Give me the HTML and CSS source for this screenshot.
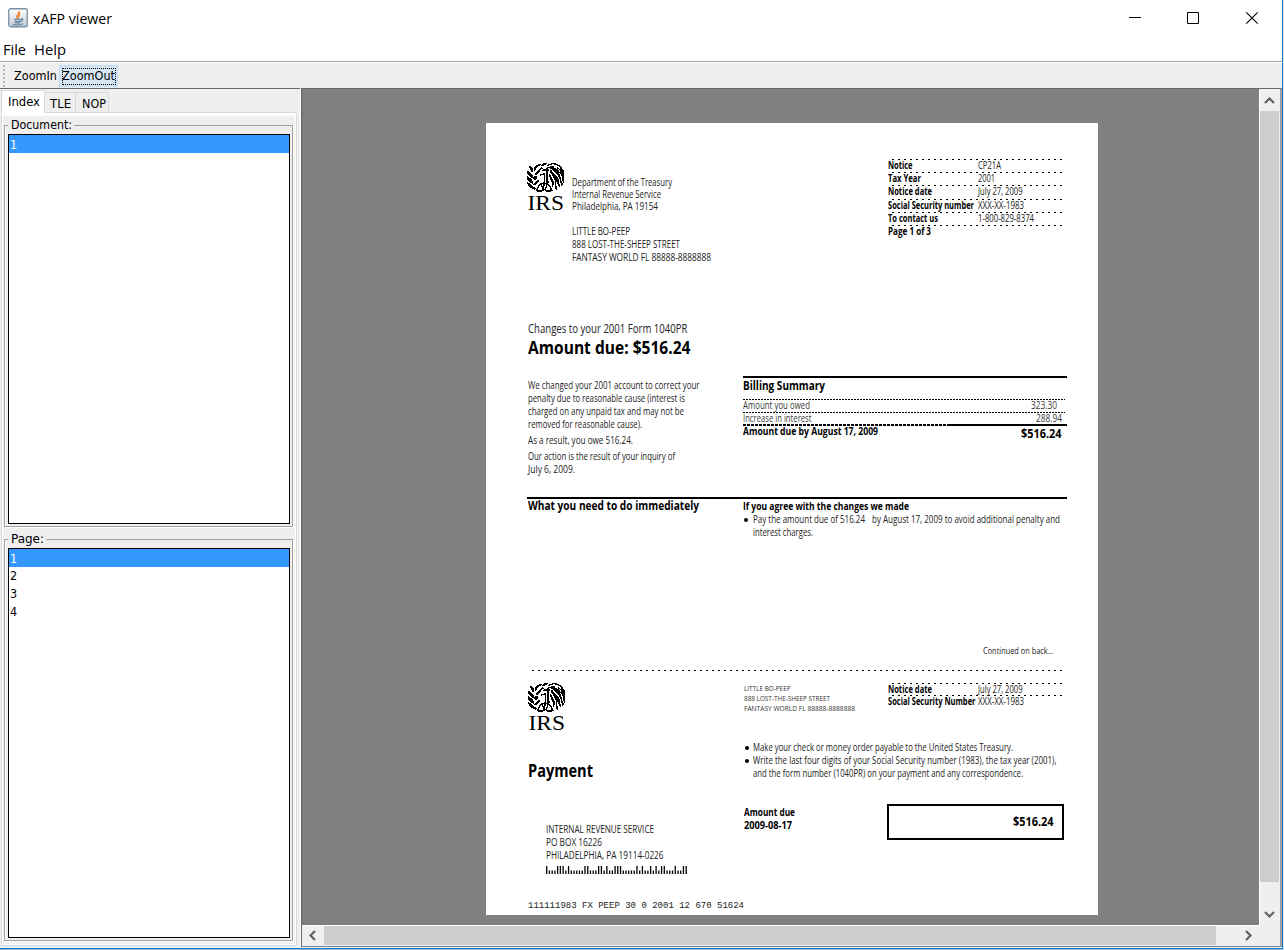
FILE: index.html
```html
<!DOCTYPE html>
<html lang="en">
<head>
<meta charset="utf-8">
<title>xAFP viewer</title>
<link rel="stylesheet" href="styles.css">
</head>
<body>
<div class="window">
  <header class="titlebar">
    <svg class="app-icon" width="20" height="20" viewBox="0 0 20 20">
      <defs><linearGradient id="g" x2="0" y2="1"><stop stop-color="#fff"/><stop offset="1" stop-color="#c3ccd6"/></linearGradient></defs>
      <rect x=".75" y=".75" width="18.5" height="18" rx="2" fill="url(#g)" stroke="#7890a5" stroke-width="1.3"/>
      <path d="M9.5 10.5c-3-3 2.5-3.500 1-7 2 2 1.200 3.300 0 4.300s-.7 1.700-1 2.700zM12 7c-2 1-2 2-1 3.500" fill="none" stroke="#ee8a3c" stroke-width="1.300"/>
      <path d="M6 11.300h7.500M6.500 12.800q3.500 1.500 6.500 0M7 14.500q3 1 5 0M13 11c3-.6 2 2-.6 2.500M4.500 16q5 2 10.500-.3" fill="none" stroke="#55789b" stroke-width="1.100"/>
    </svg>
    <span class="caption"><span class="t" data-w="79">xAFP viewer</span></span>
    <svg class="controls" width="129" height="14" viewBox="0 0 129 14" fill="none" stroke="#000">
      <path d="M0 6.500h12M58.500 1.500h11v11h-11z"/>
      <path d="M117.300 1.300l11.400 11.400M128.700 1.300l-11.400 11.400" stroke-width="1.200"/>
    </svg>
  </header>
  <nav class="menubar"><span class="t" data-w="23">File</span><span class="t" data-w="32">Help</span></nav>
  <div class="toolbar">
    <i class="grip"></i>
    <span class="tool"><span class="t" data-w="43">ZoomIn</span></span>
    <span class="tool active"><span class="focus"><span class="t" data-w="53">ZoomOut</span></span></span>
  </div>
  <main class="split">
    <aside class="side">
      <div class="tabs">
        <span class="tab on"><span class="t" data-w="32">Index</span></span><span class="tab"><span class="t" data-w="21">TLE</span></span><span class="tab nop"><span class="t" data-w="24">NOP</span></span><i class="rest"></i>
      </div>
      <div class="pane">
        <fieldset class="group"><legend><span class="t" data-w="61">Document:</span></legend>
          <ul class="list"><li class="sel">1</li></ul>
        </fieldset>
        <fieldset class="group"><legend><span class="t" data-w="33">Page:</span></legend>
          <ul class="list"><li class="sel">1</li><li>2</li><li>3</li><li>4</li></ul>
        </fieldset>
      </div>
    </aside>
    <section class="scroller">
      <div class="viewport">
        <article class="paper">
          <div class="head">
            <svg class="logo" width="38" height="54"><path class="seal"/><text x="0.500" y="47" textLength="36.500" lengthAdjust="spacingAndGlyphs">IRS</text></svg>
            <div class="address">
              <div class="from">
                <p><span class="t" data-w="100">Department of the Treasury</span></p>
                <p><span class="t" data-w="89">Internal Revenue Service</span></p>
                <p><span class="t" data-w="86">Philadelphia, PA 19154</span></p>
              </div>
              <p><span class="t" data-w="58">LITTLE BO-PEEP</span></p>
              <p><span class="t" data-w="108">888 LOST-THE-SHEEP STREET</span></p>
              <p><span class="t" data-w="139">FANTASY WORLD FL 88888-8888888</span></p>
            </div>
            <div class="notice">
              <p><b class="t" data-w="24.500">Notice</b><span class="t" data-w="23">CP21A</span></p>
              <p><b class="t" data-w="33">Tax Year</b><span class="t" data-w="17">2001</span></p>
              <p><b class="t" data-w="44">Notice date</b><span class="t" data-w="44.500">July 27, 2009</span></p>
              <p><b class="t" data-w="86">Social Security number</b><span class="t" data-w="46">XXX-XX-1983</span></p>
              <p><b class="t" data-w="50">To contact us</b><span class="t" data-w="56">1-800-829-8374</span></p>
              <p><b class="t" data-w="43">Page 1 of 3</b></p>
            </div>
          </div>
          <div class="title">
            <p class="form"><span class="t" data-w="159.500">Changes to your 2001 Form 1040PR</span></p>
            <p class="due"><b class="t" data-w="162.500">Amount due: $516.24</b></p>
          </div>
          <div class="cols summary">
            <div class="reason">
              <p><span class="t" data-w="171.500">We changed your 2001 account to correct your</span></p>
              <p><span class="t" data-w="157">penalty due to reasonable cause (interest is</span></p>
              <p><span class="t" data-w="156">charged on any unpaid tax and may not be</span></p>
              <p><span class="t" data-w="114">removed for reasonable cause).</span></p>
              <p class="gap"><span class="t" data-w="105">As a result, you owe 516.24.</span></p>
              <p class="gap"><span class="t" data-w="147">Our action is the result of your inquiry of</span></p>
              <p><span class="t" data-w="47">July 6, 2009.</span></p>
            </div>
            <div class="billing">
              <h3><b class="t" data-w="82">Billing Summary</b></h3>
              <p class="dotted"><span class="t" data-w="67">Amount you owed</span><span class="t in" data-w="26">323.30</span></p>
              <p class="dotted"><span class="t" data-w="68.500">Increase in interest</span><span class="t" data-w="26">288.94</span></p>
              <p class="total"><b class="t" data-w="135">Amount due by August 17, 2009</b><b class="t sum" data-w="40.500">$516.24</b></p>
            </div>
          </div>
          <div class="cols todo">
            <h3><b class="t" data-w="171">What you need to do immediately</b></h3>
            <div class="agree">
              <p><b class="t" data-w="166">If you agree with the changes we made</b></p>
              <p class="bullet"><span class="t" data-w="112">Pay the amount due of 516.24</span><span class="t by" data-w="188">by August 17, 2009 to avoid additional penalty and</span></p>
              <p class="indent"><span class="t" data-w="60">interest charges.</span></p>
            </div>
          </div>
          <p class="continued"><span class="t" data-w="70.500">Continued on back…</span></p>
          <div class="stub">
            <svg class="logo" width="38" height="54"><path class="seal"/><text x="0.500" y="47" textLength="36.500" lengthAdjust="spacingAndGlyphs">IRS</text></svg>
            <div class="mini">
              <p><span class="t" data-w="46.500">LITTLE BO-PEEP</span></p>
              <p><span class="t" data-w="86">888 LOST-THE-SHEEP STREET</span></p>
              <p><span class="t" data-w="111">FANTASY WORLD FL 88888-8888888</span></p>
            </div>
            <div class="notice">
              <p><b class="t" data-w="44">Notice date</b><span class="t" data-w="44.500">July 27, 2009</span></p>
              <p><b class="t" data-w="87.500">Social Security Number</b><span class="t" data-w="46">XXX-XX-1983</span></p>
            </div>
          </div>
          <div class="cols pay">
            <h2><b class="t" data-w="65">Payment</b></h2>
            <div class="steps">
              <p class="bullet"><span class="t" data-w="260">Make your check or money order payable to the United States Treasury.</span></p>
              <p class="bullet"><span class="t" data-w="303.500">Write the last four digits of your Social Security number (1983), the tax year (2001),</span></p>
              <p class="indent"><span class="t" data-w="270">and the form number (1040PR) on your payment and any correspondence.</span></p>
            </div>
          </div>
          <div class="cols remit">
            <div class="payee">
              <p><span class="t" data-w="108">INTERNAL REVENUE SERVICE</span></p>
              <p><span class="t" data-w="56">PO BOX 16226</span></p>
              <p><span class="t" data-w="117.500">PHILADELPHIA, PA 19114-0226</span></p>
              <svg class="postnet" width="142" height="8"></svg>
            </div>
            <div class="amount">
              <p><b class="t" data-w="51">Amount due</b></p>
              <p><b class="t" data-w="48">2009-08-17</b></p>
            </div>
            <div class="box"><b class="t" data-w="40.500">$516.24</b></div>
          </div>
          <p class="ocr"><span class="t" data-w="216">111111983 FX PEEP 30 0 2001 12 670 51624</span></p>
        </article>
      </div>
      <div class="vbar">
        <svg width="19" height="21" viewBox="0 0 19 21"><path d="M5 13l4.500-4.500 4.500 4.500"/></svg>
        <i class="thumb"></i>
        <svg width="19" height="21" viewBox="0 0 19 21"><path d="M5 8l4.500 4.500 4.500-4.500"/></svg>
      </div>
      <div class="hbar">
        <svg width="21" height="19" viewBox="0 0 21 19"><path d="M12 5l-4.500 4.500 4.500 4.500"/></svg>
        <i class="thumb"></i>
        <svg width="21" height="19" viewBox="0 0 21 19"><path d="M8 5l4.500 4.500-4.500 4.500"/></svg>
      </div>
    </section>
  </main>
</div>
<script src="app.js"></script>
</body>
</html>
```
FILE: styles.css
```css
* { box-sizing: border-box; }
body, p, h2, h3, ul, fieldset { margin: 0; padding: 0; }
body { width: 1284px; height: 950px; overflow: hidden; background: #fff; color: #000; font: 12.5px "DejaVu Sans Condensed", "DejaVu Sans", sans-serif; font-stretch: condensed; }
svg { display: block; flex: none; }
.t { display: inline-block; white-space: pre; transform-origin: 0 50%; flex: none; }

.window { width: 1284px; height: 950px; display: flex; flex-direction: column; border-right: 1px solid #dbe6f0; border-bottom: 1px solid #a3b5c4; }
.titlebar, .menubar, .toolbar, .split { border-right: 1px solid #0a7ad8; }
.titlebar { height: 38px; display: flex; align-items: center; padding-left: 8px; }
.app-icon { margin-bottom: 3px; }
.caption { margin-left: 5px; font: 15px/36px "Open Sans", sans-serif; margin-bottom: 2px; }
.controls { margin-left: auto; margin-right: 24px; margin-bottom: 2px; }
.menubar { height: 24px; display: flex; gap: 8px; padding-left: 3px; font: 15px/22px "Open Sans", sans-serif; border-bottom: 1px solid #a0a0a0; }
.toolbar { height: 26px; display: flex; align-items: center; background: #efefef; border-top: 1px solid #fff; padding-left: 3px; }
.grip { width: 2px; height: 22px; background: repeating-linear-gradient(#b8b8b8 0 2px, transparent 2px 4px); }
.tool { height: 22px; line-height: 22px; padding-left: 9px; }
.tool.active { margin-left: 2px; padding: 2px; background: #d5e5f3; border: 1px solid #bfdcf5; width: 59px; }
.focus { display: block; width: 54px; height: 17px; line-height: 16px; outline: 1px dotted #000; outline-offset: -1px; }

.split { flex: 1; display: flex; min-height: 0; border-bottom: 1px solid #0a7ad8; }
.side { width: 300px; display: flex; flex-direction: column; background: #efefef; border-top: 1px solid #696969; padding: 1px 3px 1px 1px; height: 859px; }
.tabs { display: flex; align-items: flex-end; height: 23px; line-height: 21px; }
.tab { height: 21px; width: 31px; padding-left: 5px; border: 1px solid #d9d9d9; border-left: 0; }
.tab.on { height: 23px; width: 44px; padding-left: 6px; background: #fff; border-left: 1px solid #d9d9d9; border-bottom: 0; line-height: 22px; }
.tab.nop { width: 33px; padding-left: 6px; }
.rest { flex: 1; height: 1px; background: #d9d9d9; }
.pane { flex: 1; min-height: 0; display: flex; flex-direction: column; background: #efefef; border: 1px solid #d9d9d9; border-top: 3px solid #fff; box-shadow: inset 1px 0 #fff, inset -1px -1px #fff; padding: 2px 2px 3px 2px; }
.group { flex: 1; min-width: 0; border: 1px solid #a0a0a0; box-shadow: 1px 1px #fff, inset 1px 0 #fff; margin: 0 1px 1px 0; padding: 0 2px 2px 3px; display: flex; }
.pane .group + .group { margin-top: 4px; }
legend { padding: 0 2px 0 3px; height: 15px; line-height: 14px; margin-left: 0; }
.list { flex: none; width: 282px; list-style: none; background: #fff; border: 1px solid #000; height: 390px; line-height: 18px; margin-top: 1px; }
.list li { height: 18px; padding-left: 1px; }
.list .sel { background: #3399ff; color: #fff; padding-top: 1px; }

.scroller { width: 981px; height: 859px; margin-left: 1px; display: grid; grid-template-columns: 957px 20px; grid-template-rows: 836px 20px; border: 1px solid #696969; border-right: 2px solid #a0a0a0; border-bottom-color: #808080; background: #efefef; }
.viewport { background: #808080; padding: 34px 0 0 183px; overflow: hidden; border-left: 1px solid #787880; }
.vbar { border-left: 1px solid #fff; display: flex; flex-direction: column; padding-top: 1px; }
.vbar .thumb { height: 771px; margin: 0 0 22px; background: #cdcdcd; width: 19px; }
.hbar { border-top: 1px solid #fff; display: flex; padding-left: 1px; }
.hbar .thumb { width: 892px; margin-right: 22px; background: #cdcdcd; height: 19px; }
.vbar path, .hbar path { fill: none; stroke: #606060; stroke-width: 2.200; }

.paper { width: 612px; height: 792px; background: #fff; display: flex; flex-direction: column; padding: 0 31px 0 41px; color: #222; font: 10px/13px "Open Sans", "Noto Sans", sans-serif; font-stretch: normal; }
.paper p, .paper h3, .paper h2 { height: 13px; font-size: 10px; line-height: 13px; font-weight: normal; white-space: nowrap; }
.paper b { font-weight: 700; color: #000; }
.head { display: flex; height: 199px; }
.logo { margin-top: 40px; }
.logo text { font: 22px "Liberation Serif", serif; }
.logo .seal { fill: #000; shape-rendering: crispEdges; }
.address { margin: 53px 0 0 7px; width: 200px; }
.from { height: 49px; }
.from p { height: 12px; line-height: 12px; }
.notice { margin: 36px 0 0 116px; width: 176px; }
.notice p { display: grid; grid-template-columns: 90px 86px; height: 13.200px; background: repeating-linear-gradient(90deg, transparent 0 4px, #000 4px 6px) 0 0 / 100% 1px no-repeat; }
.notice .t { justify-self: start; }
.head .notice p:nth-child(n+4) { line-height: 12px; }
.title { padding-left: 1px; height: 54px; }
.paper .form { font-size: 12px; }
.paper .due { font-size: 17px; height: 24px; line-height: 26px; }
.cols { display: flex; }
.summary { height: 121px; }
.reason { width: 216px; padding: 3px 0 0 1px; }
.reason .gap { margin-top: 3px; }
.billing { width: 324px; }
.billing h3 { height: 23px; border-top: 2px solid #000; line-height: 15px; font-size: 11.500px; }
.billing p { display: flex; justify-content: space-between; padding-right: 5.500px; }
.dotted { background: repeating-linear-gradient(90deg, #000 0 2px, transparent 2px 3px) 0 0 / 322px 1px no-repeat; }
.paper .dotted .t { color: #3a3a3a; }
.dotted .in { margin-right: 5px; }
.total { margin-top: -1px; padding-top: 1px; background: linear-gradient(#000, #000) 204px 0 / 120px 2px no-repeat, repeating-linear-gradient(90deg, #000 0 3px, transparent 3px 4px) 0 0 / 204px 2px no-repeat; }
.sum { font-size: 11.500px; padding-top: 2px; }
.todo { border-top: 2px solid #000; height: 148px; padding-top: 1px; }
.todo h3 { width: 216px; font-size: 11.500px; padding-left: 1px; line-height: 12px; }
.agree, .steps { width: 324px; }
.bullet { display: flex; align-items: center; }
.bullet::before { content: ""; width: 4px; height: 4px; border-radius: 2px; background: #000; margin: 0 4.500px 0 1px; }
.by { margin-left: 7px; }
.indent { padding-left: 9.500px; }
.paper .continued { padding-left: 456px; font-size: 9px; height: 25px; line-height: 12px; }
.stub { display: flex; height: 71px; margin-left: 1px; background: repeating-linear-gradient(90deg, #000 0 2px, transparent 2px 6px) 4px 0 / 532px 1px no-repeat; }
.stub .logo { margin-top: 13px; }
.mini { width: 144px; margin: 13px 0 0 178px; }
.paper .mini p { font-size: 8px; height: 10px; line-height: 10px; color: #333; }
.stub .notice { margin: 13px 0 0; }
.stub .notice p { height: 12px; line-height: 12px; }
.pay { height: 63px; }
.paper h2 { width: 217px; font-size: 17px; line-height: 24px; padding: 18px 0 0 1px; height: 42px; }
.remit { height: 96px; }
.payee { width: 217px; padding: 19px 0 0 19px; }
.postnet { margin-top: 4px; }
.amount { width: 143px; padding-top: 2px; }
.box { width: 177px; height: 36px; border: 2px solid #000; padding-right: 8.500px; text-align: right; font-size: 11.500px; line-height: 32px; }
.paper .ocr { font: 9px/13px "Liberation Mono", monospace; padding-left: 1px; }
```
FILE: app.js
```js
// Scale each text run horizontally to the width its layout asks for.
document.querySelectorAll('.t').forEach(function (el) {
  var want = parseFloat(el.dataset.w);
  var exact = el.getBoundingClientRect().width;
  el.style.width = want + 'px';
  el.style.transform = 'scaleX(' + want / exact + ')';
});

// One-bit seal above the agency initials.
var seal = [
  '................####....#####........',
  '...........###.####..####..####......',
  '.........####.###...##........###....',
  '..##....###............####.....##...',
  '..###..###....#.....#######...#..##..',
  '...###.##....###...##..######.##.##..',
  '...###.##...##..######...######.####.',
  '....##.#...##..#######.##.######.####',
  '##..##....###......##..##..#####.####',
  '###......###.......##..###..#########',
  '####....###.....##.##...###..###.####',
  '.####...##...#####.##.#..###..###.###',
  '..####.......#...#.##.##.####..##.###',
  '#..###.###.......#.##.##..####.##..##',
  '##..######.......#.##..##.#####.##.##',
  '####..####.......#.##..##..####.##.##',
  '#####..##........#.##..###.#####.#.##',
  '.####.....##.....#.##...##..####.#.##',
  '..####...###.....#.###..###.####.##.#',
  '#..###..###.....##.###...##.#.##.##.#',
  '###..#.###...########....##.#.##..##.',
  '.###..###...###.##.###...##.#..##.##.',
  '.####......##.#.##.#.##..#..#..##.#..',
  '..####.....#..###..#..##.#..##..#....',
  '...#####..##...##.##...#....##.......',
  '.....####.#....##.#....##...##.......',
  '.......#.##....####....##....#.......',
  '.........########.########...........',
  '..........#####....#####.............'
];
var sealPath = '';
seal.forEach(function (row, y) {
  row.replace(/#+/g, function (run, x) {
    sealPath += 'M' + x + ' ' + y + 'h' + run.length + 'v1h-' + run.length + 'z';
  });
});
document.querySelectorAll('.seal').forEach(function (el) { el.setAttribute('d', sealPath); });

// POSTNET bars for ZIP 19114-0226 with its check digit.
(function () {
  var codes = ['11000', '00011', '00101', '00110', '01001', '01010', '01100', '10001', '10010', '10100'];
  var bits = '1' + '1911402264'.split('').map(function (d) { return codes[d]; }).join('') + '1';
  var path = bits.split('').map(function (b, i) {
    return 'M' + (i * 2.735 + 0.7).toFixed(2) + ' 8v' + (b === '1' ? -8 : -3.500);
  }).join('');
  document.querySelector('.postnet').innerHTML = '<path d="' + path + '" stroke="#000" stroke-width="1.3"/>';
})();
```
